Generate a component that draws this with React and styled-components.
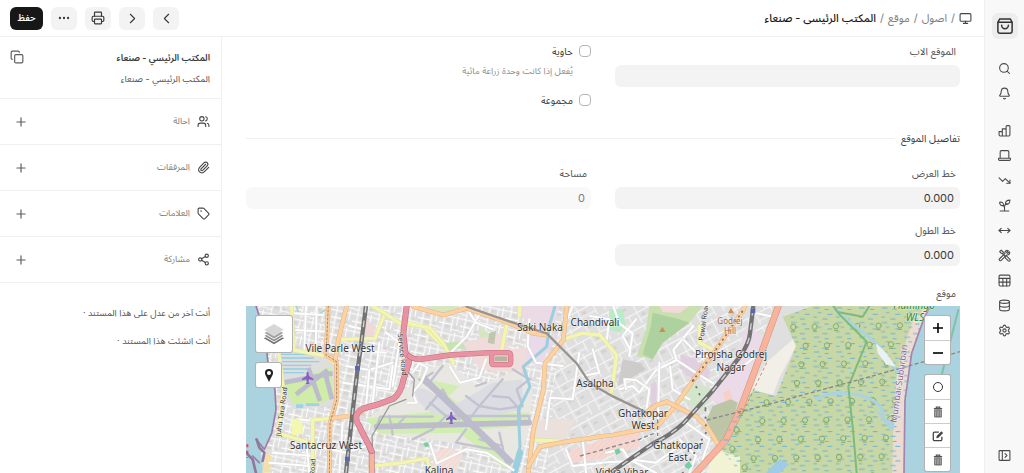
import { useState } from "react";
import styled, { createGlobalStyle } from "styled-components";
import {
  Bell,
  ChevronLeft,
  ChevronRight,
  Copy,
  Database,
  Ellipsis,
  Monitor,
  MoveHorizontal,
  Paperclip,
  Plus,
  Printer,
  Search,
  Settings,
  Share2,
  Tag,
  TrendingDown,
  Users,
} from "lucide-react";

const railItems = [
  { label: "بحث", icon: <Search /> },
  { label: "الإشعارات", icon: <Bell />, last: true },
  { label: "المحاسبة", icon: <BarsIcon /> },
  { label: "الأصول", icon: <LaptopIcon /> },
  { label: "المبيعات", icon: <TrendingDown /> },
  { label: "الزراعة", icon: <SproutIcon /> },
  { label: "الحركة", icon: <MoveHorizontal /> },
  { label: "الأدوات", icon: <ToolsIcon /> },
  { label: "الجداول", icon: <TableIcon /> },
  { label: "البيانات", icon: <Database /> },
  { label: "الإعدادات", icon: <Settings /> },
];

const asideItems = [
  { label: "احالة", icon: <Users /> },
  { label: "المرفقات", icon: <Paperclip /> },
  { label: "العلامات", icon: <Tag /> },
  { label: "مشاركة", icon: <Share2 /> },
];

function App() {
  return (
    <Page dir="rtl">
      <GlobalStyle />
      <Rail>
        <LogoButton aria-label="الرئيسية">
          <BagIcon />
        </LogoButton>
        {railItems.map((item) => (
          <RailButton key={item.label} aria-label={item.label} $last={item.last}>
            {item.icon}
          </RailButton>
        ))}
        <RailBottom>
          <RailButton aria-label="توسيع">
            <PanelIcon />
          </RailButton>
        </RailBottom>
      </Rail>
      <Main>
        <Header />
        <Body>
          <LocationForm />
          <Aside />
        </Body>
      </Main>
    </Page>
  );
}

export default App;

function Header() {
  return (
    <HeaderBar>
      <Crumbs>
        <a href="#home" aria-label="الرئيسية">
          <Monitor />
        </a>
        <span>/</span>
        <a href="#assets">اصول</a>
        <span>/</span>
        <a href="#location">موقع</a>
        <span>/</span>
        <strong>المكتب الرئيسى - صنعاء</strong>
      </Crumbs>
      <Actions>
        <ToolButton aria-label="السابق" $big>
          <ChevronLeft />
        </ToolButton>
        <ToolButton aria-label="التالي" $big>
          <ChevronRight />
        </ToolButton>
        <ToolButton aria-label="طباعة">
          <Printer />
        </ToolButton>
        <ToolButton aria-label="المزيد">
          <Ellipsis />
        </ToolButton>
        <SaveButton>حفظ</SaveButton>
      </Actions>
    </HeaderBar>
  );
}

function Aside() {
  return (
    <AsideBox>
      <AsideTitle>
        <div>
          <h3>المكتب الرئيسي - صنعاء</h3>
          <p>المكتب الرئيسي - صنعاء</p>
        </div>
        <IconButton aria-label="نسخ">
          <Copy />
        </IconButton>
      </AsideTitle>
      {asideItems.map((item) => (
        <AsideRow key={item.label}>
          {item.icon}
          <span>{item.label}</span>
          <IconButton aria-label={`إضافة ${item.label}`} $inset>
            <Plus />
          </IconButton>
        </AsideRow>
      ))}
      <Notes>
        <p>أنت آخر من عدل على هذا المستند ·</p>
        <p>أنت انشئت هذا المستند ·</p>
      </Notes>
    </AsideBox>
  );
}

function LocationForm() {
  const [values, setValues] = useState({
    parent: "",
    latitude: "0.000",
    longitude: "0.000",
  });

  const handleChange = (e) => {
    setValues({ ...values, [e.target.name]: e.target.value });
  };

  return (
    <Form>
      <Columns>
        <Field>
          <label htmlFor="parent">الموقع الاب</label>
          <input id="parent" name="parent" value={values.parent} onChange={handleChange} />
        </Field>
        <Checks>
          <CheckLabel>
            <input type="checkbox" />
            حاوية
          </CheckLabel>
          <Hint>يُفعل إذا كانت وحدة زراعة مائية</Hint>
          <CheckLabel>
            <input type="checkbox" />
            مجموعة
          </CheckLabel>
        </Checks>
      </Columns>
      <SectionTitle>تفاصيل الموقع</SectionTitle>
      <Columns>
        <div>
          <Field>
            <label htmlFor="latitude">خط العرض</label>
            <input id="latitude" name="latitude" value={values.latitude} onChange={handleChange} />
          </Field>
          <Field>
            <label htmlFor="longitude">خط الطول</label>
            <input id="longitude" name="longitude" value={values.longitude} onChange={handleChange} />
          </Field>
        </div>
        <Field>
          <label htmlFor="area">مساحة</label>
          <input id="area" value="0" disabled readOnly />
        </Field>
      </Columns>
      <MapTitle>موقع</MapTitle>
      <LocationMap />
    </Form>
  );
}

function LocationMap() {
  return (
    <MapBox dir="ltr">
      <MapTiles />
      <MapControls $side="left">
        <MapGroup>
          <MapButton $large aria-label="الطبقات">
            <LayersIcon />
          </MapButton>
        </MapGroup>
        <MapGroup>
          <MapButton aria-label="موقعي">
            <PinIcon />
          </MapButton>
        </MapGroup>
      </MapControls>
      <MapControls $side="right">
        <MapGroup>
          <MapButton aria-label="تكبير">
            <svg viewBox="0 0 12 12" width="12" height="12">
              <path d="M6 1v10M1 6h10" stroke="#000" strokeWidth="1.6" />
            </svg>
          </MapButton>
          <MapButton aria-label="تصغير">
            <svg viewBox="0 0 12 12" width="12" height="12">
              <path d="M1 6h10" stroke="#000" strokeWidth="1.6" />
            </svg>
          </MapButton>
        </MapGroup>
        <MapGroup>
          <MapButton aria-label="رسم دائرة">
            <svg viewBox="0 0 12 12" width="12" height="12">
              <circle cx="6" cy="6" r="4.5" fill="none" stroke="#333" />
            </svg>
          </MapButton>
          <MapButton aria-label="مسح">
            <TrashIcon />
          </MapButton>
          <MapButton aria-label="تعديل">
            <EditIcon />
          </MapButton>
          <MapButton aria-label="حذف الكل">
            <TrashIcon />
          </MapButton>
        </MapGroup>
      </MapControls>
    </MapBox>
  );
}

// road: wide casing stroke with the fill stroke on top
function Road({ d, fill, edge, width = 10 }) {
  return (
    <>
      <path d={d} stroke={edge} strokeWidth={width + 3} />
      <path d={d} stroke={fill} strokeWidth={width} />
    </>
  );
}

function Railway({ d }) {
  return (
    <>
      <path d={d} stroke="#737373" strokeWidth="13" strokeLinecap="butt" />
      <path d={d} stroke="#d6d6d6" strokeWidth="4" strokeDasharray="20 24" strokeLinecap="butt" />
    </>
  );
}

const yellowRoads = [
  "M137 0L142 132L240 150L276 180",
  "M282 100L387 97L417 22",
  "M380 0L417 22L462 52L532 62L590 120",
  "M97 132L112 252L97 382L205 414",
  "M200 501V342L257 337",
  "M372 482L470 470L542 457L556 501",
  "M472 48L552 66L592 112L622 172",
  "M783 50L767 132M822 0L820 30",
  "M962 97L1007 82L1062 87L1112 147L1097 257",
  "M860 402L962 406",
  "M1360 60L1360 110L1400 130",
];

const orangeRoads = [
  "M247 0L240 147L272 167L272 282L252 352L250 501",
  "M302 0L277 102L268 162",
  "M257 337L332 327L362 307",
  "M502 2L592 27L662 7L792 52L862 82L902 87",
  "M962 0L952 102L897 172L892 252L862 372L847 501",
  "M847 482L882 422L962 407L1062 392L1102 387L1232 362L1287 302L1342 222L1402 142L1492 12L1497 0",
  "M1182 332L1232 297L1262 287L1352 332L1390 372L1422 425",
];

const whiteRoads = [
  "M142 22L232 27M150 72L240 77M180 0L175 132M212 0L209 132M300 180L370 192L440 170M290 230L430 250L440 180",
  "M370 192L360 300M400 110L380 290M420 80L460 110L440 240M300 130L420 140M310 60L350 70",
  "M180 400L190 501M160 340L200 345M210 420L300 440L360 420M80 440L200 450M290 350L280 501M70 470L190 480",
  "M500 200L520 172L545 185L525 230L500 260L512 290L485 290",
  "M612 182L642 230L700 215L720 160M702 22L662 92L602 152M662 7L690 50L740 70M850 40L845 120L870 170L950 180",
  "M552 412L572 472L660 430L722 440L802 492M980 0L950 72M1000 140L980 280L912 275L900 370",
  "M1032 30L1090 40L1080 120M1102 0L1120 52L1160 82L1150 150M1170 40L1130 90L1152 130M1040 130L1060 200L1010 210",
  "M1342 60L1282 132L1292 162L1230 192L1180 260L1160 240L1120 250M1292 162L1352 202L1402 232M1272 182L1280 250L1330 280",
  "M1312 100L1360 150L1390 150M1140 250L1135 220L1170 222L1210 250L1200 320M1240 170L1235 390",
  "M1080 440L1130 430L1150 460L1230 470L1300 420M1050 470L1160 465L1230 501M1300 400L1350 450L1330 501M1320 350L1390 400L1370 460",
  "M1522 20L1582 32L1602 0M1480 190L1530 150M960 430L980 480L1070 470M1010 400L1020 500",
];

const taxiways = [
  "M392 362L402 332H560M430 330L440 385M480 330L450 362M552 290L600 330H730L850 330",
  "M540 310L590 250L640 340M550 230L590 180M600 330L560 370L500 400M560 200L530 220",
  "M660 270L700 300L670 340M700 300L770 220M700 300L760 310L830 300L812 250L850 220L800 190M690 240L720 230",
  "M740 270L790 275L820 310L822 340M520 220L560 250L612 300M660 370L630 410L740 430M760 380L780 470M700 400L770 420M850 330V348",
];

const trees = [];
for (let row = 0; row < 9; row++) {
  for (let col = 0; col < 12; col++) {
    trees.push([1450 + col * 64 + ((row * 37) % 50), 36 + row * 56 + ((col * 29) % 30)]);
  }
}

function MapTiles() {
  return (
    <svg viewBox="0 0 714 300" width="100%" preserveAspectRatio="xMidYMin slice" aria-hidden="true">
      <defs>
        <pattern id="streets" width="64" height="52" patternUnits="userSpaceOnUse" patternTransform="rotate(12)">
          <path d="M20 14h12v8h-12zM46 34h8v8h-8zM20 34h14v8h-14z" fill="#d8d3ce" />
          <path d="M0 8H64M0 30H40M14 0V52M40 8V52M54 0V30M40 44H64M0 46H14" stroke="#fff" strokeWidth="3" fill="none" />
        </pattern>
        <pattern id="streets-east" width="78" height="86" patternUnits="userSpaceOnUse" patternTransform="rotate(-28)">
          <path d="M18 18h16v8h-16zM54 24h12v7h-12zM22 60h12v9h-12z" fill="#d5d1ce" />
          <path d="M0 10H78M12 10V86M44 0V52M0 52H78M62 52V86M12 74H62" stroke="#f7f7f7" strokeWidth="3" fill="none" />
        </pattern>
        <pattern id="marsh" width="68" height="44" patternUnits="userSpaceOnUse">
          <path d="M3 6h17M36 10h12M16 20h10M44 25h15M2 33h11M29 39h16" stroke="#6cb2d8" strokeWidth="3" />
        </pattern>
        <pattern id="hatch" width="12" height="12" patternUnits="userSpaceOnUse" patternTransform="rotate(45)">
          <path d="M0 0V12" stroke="#f2c0b8" strokeWidth="2" />
        </pattern>
        <clipPath id="mangrove">
          <path d="M1610 32L1700 0H2050L1985 90L1952 212L1942 382V501H1482L1422 425L1472 322L1522 252L1590 270L1650 120Z" />
        </clipPath>
      </defs>
      <g transform="scale(0.33333)" fill="none" strokeLinejoin="round" strokeLinecap="round">
        <rect width="2142" height="900" fill="#e0dfdf" />
        <rect width="1100" height="900" fill="url(#streets)" />
        <path d="M950 0H1630L1400 501H900Z" fill="#e0dfdf" />
        <path d="M950 0H1630L1400 501H900Z" fill="url(#streets-east)" />

        {/* land use patches */}
        <path d="M552 0H640L610 22L560 15ZM700 62L750 95L740 130L700 110Z" fill="#d6e5c2" />
        <path d="M592 112L650 105L660 125L600 135Z" fill="#c4e6ac" />
        <path d="M650 110L770 80L790 130L880 122L860 170L820 200L700 190Z" fill="#f0dcdb" />
        <path d="M730 80L750 75L745 115L725 110Z" fill="#bfc7ae" />
        <path d="M842 82L942 92L900 142L890 190L840 160Z" fill="#e8dae8" />
        <path d="M802 0H940L920 70L850 60Z" fill="#eadbe5" />
        <path d="M355 40L390 60L380 92H350Z" fill="#f0d8d8" />
        <path d="M860 340H990L960 400H870Z" fill="#eae0dc" />
        <path d="M560 440L600 425L650 440L630 501H560Z" fill="#f3e0dc" />
        <path d="M560 440L600 425L650 440L630 501H560Z" fill="url(#hatch)" />
        <path d="M972 432L1182 372V420L1060 460L970 470Z" fill="#f5d8d2" />
        <path d="M972 432L1182 372V420L1060 460L970 470Z" fill="url(#hatch)" />
        <path d="M137 342L170 330V382L137 390Z" fill="#f3f7b0" />
        <path d="M1090 10H1130L1140 60L1120 80L1090 70Z" fill="#b9ebc6" />
        <path d="M1305 145L1350 160L1380 215L1335 215L1300 185ZM1350 182L1380 170L1395 200L1370 220ZM1214 235L1232 225V320L1214 330Z" fill="#e0cfdf" />
        <path d="M1300 280L1340 230L1410 250L1370 315Z" fill="#d3e6cb" />
        <path d="M1130 160L1180 170L1200 190L1150 220L1115 240Z" fill="#cdccca" />

        {/* forest hill */}
        <path d="M1210 0H1370L1330 50L1250 110L1220 160L1172 150L1200 70Z" fill="#c8dfaf" />
        <path d="M1220 20L1300 40L1330 50L1250 110L1220 160L1190 145L1215 60Z" fill="#aed1a0" />
        <path d="M1240 0L1330 0L1300 22L1250 18Z" fill="#f2dada" />
        <path d="M1240 78l9-16 9 16zM1446 22l9-16 9 16z" fill="#d08a4c" />

        {/* industrial strip along the railway */}
        <path d="M1500 62L1582 102L1550 190L1470 330L1392 280L1420 210L1470 150Z" fill="#ebdbe8" />
        <path d="M1430 262L1450 250L1460 275L1440 290Z" fill="#f8cfc9" />
        <path d="M1400 300L1455 280L1475 290L1452 380L1420 410L1380 345Z" fill="#bcc5a6" />
        <path d="M1582 0H1720L1660 90L1600 140L1540 215L1500 290L1470 330Z" fill="#dfdfdf" />
        <path d="M1560 170L1670 75L1640 140L1600 215L1580 270L1500 300L1530 220Z" fill="#f2efe9" />
        <path d="M1610 32L1700 0H2050L1985 90L1952 212L1942 382V501H1482L1422 425L1472 322L1522 252L1590 270L1650 120Z" fill="#c8d7a6" />
        <path d="M1404 430L1482 452V501H1382Z" fill="#f2f3d4" />

        {/* airport */}
        <path d="M402 312L490 240L540 190L602 172L700 240L820 190L860 250L852 350L820 470L802 501L700 430L560 400L400 385L362 340Z" fill="#e9e7e1" />
        <path d="M360 338L430 330L560 318L640 240L520 215L500 230L530 205L670 320L850 320V358L700 370L800 480L780 490L640 380L400 384Z" fill="#d2edb2" />
        <path d="M520 290L500 240L540 250L620 300L740 230L830 220V310L740 330L560 325Z" fill="#dcdce3" />
        {taxiways.map((d) => (
          <path key={d} d={d} stroke="#c2c2d0" strokeWidth="7" />
        ))}
        <path d="M392 362L850 350" stroke="#bcbccd" strokeWidth="17" />
        <path d="M530 214L798 472" stroke="#bcbccd" strokeWidth="20" strokeLinecap="butt" />
        <path d="M97 132L240 150L268 180L262 300L140 310L100 250Z" fill="#dedede" />
        <path d="M112 232L255 182L262 272L225 292L140 295Z" fill="#cfeca8" />
        <path d="M112 230L260 202M187 185L222 285M150 265L245 192M240 210L258 280" stroke="#bcbccd" strokeWidth="14" strokeLinecap="butt" />
        <path d="M105 145h80M107 156h95M108 167h110M110 178h85M112 189h70M114 200h60" stroke="#90cfe4" strokeWidth="4" />
        <path d="M150 295h22v12h-22zM180 292h40v8h-40z" fill="#9fd3e2" />

        {/* water */}
        <path d="M0 0H30L57 82L67 182L87 252L90 312L77 382L45 440L52 501V900H0Z" fill="#aad3df" />
        <path d="M60 440L77 450L72 500H48L55 470Z" fill="#f5dfa8" />
        <path d="M30 0L57 82L67 182L87 252L90 312L77 382L55 430L30 400M40 470L20 450" stroke="#9c7ba8" strokeWidth="5" />
        <path d="M32 400L40 425L55 440L50 465M0 440L20 460L30 501" stroke="#8f789c" strokeWidth="8" />
        <path d="M4 415v40" stroke="#e0475b" strokeWidth="6" strokeDasharray="9 10" strokeLinecap="butt" />
        <path d="M927 0L912 52L902 122L832 182L852 242L817 312L822 422L805 501" stroke="#9bcede" strokeWidth="9" />
        <path d="M150 0L160 24L210 30L240 10" stroke="#a5d6c6" strokeWidth="5" />
        <path d="M805 501L822 440" stroke="#9bcede" strokeWidth="20" />

        {whiteRoads.map((d) => (
          <Road key={d} d={d} fill="#fff" edge="#dcdcdc" width={6} />
        ))}
        {yellowRoads.map((d) => (
          <Road key={d} d={d} fill="#f3f5b0" edge="#dcdeae" width={10} />
        ))}
        {orangeRoads.map((d) => (
          <Road key={d} d={d} fill="#fbd2a0" edge="#e6b283" width={11} />
        ))}
        <path d="M247 0L240 147L272 167L272 282L252 352L250 501" stroke="#a78463" strokeWidth="3" strokeDasharray="6 6" />
        <path d="M1340 225L1402 142L1492 12" stroke="#8d7361" strokeWidth="6" strokeDasharray="1 16" />
        <path d="M1310 501L1380 380L1378 310M1342 222L1380 310" stroke="#777" strokeWidth="6" strokeDasharray="1 22" />
        <path d="M662 2L792 47L902 82L952 132L992 172L1032 232L1102 272L1202 320" stroke="#99948e" strokeWidth="7" />
        <path d="M1002 450L1180 400L1230 380M1235 320V390" stroke="#888" strokeWidth="4" strokeDasharray="12 8" strokeLinecap="butt" />
        <path d="M380 430L378 390L430 300L480 280M500 270L505 220L480 190" stroke="#9a9a9a" strokeWidth="4" />

        <Railway d="M360 0L347 102L332 212L317 342L300 501" />
        <Railway d="M1092 501L1222 412Q1270 390 1312 352L1402 252L1482 152Q1510 110 1512 82L1522 0" />
        <path d="M327 180h14v14h-14zM297 452h14v14h-14zM1514 8h14v14h-14z" fill="#5b67ad" />

        <Road d="M367 412L377 440V501" fill="#f9b29c" edge="#a5606b" width={14} />
        <Road
          d="M482 0L472 82L478 140Q492 155 488 172L472 222Q465 262 442 278L400 294L352 307Q325 320 332 345L352 385L377 435"
          fill="#e892a2"
          edge="#b8707c"
          width={15}
        />
        <Road
          d="M490 150Q502 162 530 159L612 147L732 140H785Q794 140 794 150V168Q794 176 785 176H745Q737 176 737 168V144"
          fill="#e892a2"
          edge="#c07080"
          width={13}
        />
        <path d="M747 151H784V166H747Z" fill="#b7b39f" />
        <Road d="M1597 0L1542 152L1482 312L1440 402L1332 520" fill="#f9b29c" edge="#c8947d" width={17} />
        <path d="M1562 170L1490 320" stroke="#ca8a5f" strokeWidth="3" strokeDasharray="9 8" strokeLinecap="butt" />

        {/* mangrove */}
        <g clipPath="url(#mangrove)">
          <rect x="1400" width="700" height="501" fill="url(#marsh)" />
          {trees.map(([x, y]) => (
            <g key={`${x}-${y}`} stroke="#85ad6c" strokeWidth="3">
              <circle cx={x} cy={y} r="8" />
              <path d={`M${x - 5} ${y + 12}h10`} />
            </g>
          ))}
        </g>
        <path d="M1712 277Q1782 250 1850 270T1910 340L1972 367" stroke="#aad3df" strokeWidth="10" />
        <path d="M1880 300L1930 350L1972 355V382L1930 370Z" fill="#aad3df" />
        <path d="M1767 12L1892 112L1942 182L1982 220" stroke="#aad3df" strokeWidth="9" />
        <path d="M1890 112L1920 140L1950 182L1920 175L1895 140Z" fill="#e9f1f5" />
        <path d="M1560 501L1600 460L1630 475L1600 501Z" fill="#9fcbe6" />
        <path d="M1762 0L1780 25L1862 107L1807 242L1822 382L1832 501M1775 18L1850 32L1870 0" stroke="#7dbb7a" strokeWidth="6" />

        {/* creek shore */}
        <path d="M2042 0L2002 42L1985 90L1962 212L1942 382L1938 501H1974L1977 282L1997 142L2032 42L2052 0Z" fill="#ebdbd0" />
        <path d="M2042 0L2002 42L1985 90L1962 212L1942 382L1938 501H1974L1977 282L1997 142L2032 42L2052 0Z" fill="url(#marsh)" />
        <path d="M2052 0H2142V900H1974V501L1977 282L1997 142L2032 42Z" fill="#aad3df" />
        <path d="M2052 0L2032 42L1997 142L1977 282L1974 501" stroke="#a783ad" strokeWidth="5" />
        <path d="M2137 12L2087 207" stroke="#7cc3a7" strokeWidth="6" />
        <path d="M1382 342L1542 302L1872 212L2142 137" stroke="#888" strokeWidth="4" strokeDasharray="12 7" strokeLinecap="butt" />

        <path d="M182 198l5 0 2 12 13 8v5l-13-3-1 10 4 4h-14l4-4-1-10-13 3v-5l13-8z" fill="#8461c4" />
        <path d="M613 318l5 0 2 12 12 8v5l-12-3-1 10 4 4h-14l4-4-1-10-12 3v-5l12-8z" fill="#8461c4" />
        <path d="M1105 432l14-5 6 12-14 8zM1315 478l14-12 10 14-12 10zM532 412l12-4 6 12-12 4z" fill="#75cfa4" />
      </g>
      <g>
        <Place x="94" y="46">Vile Parle West</Place>
        <Place x="80" y="143">Santacruz West</Place>
        <Place x="294" y="25">Saki Naka</Place>
        <Place x="349" y="20">Chandivali</Place>
        <Place x="349" y="81">Asalpha</Place>
        <Place x="193" y="168">Kalina</Place>
        <Place x="397" y="111">Ghatkopar</Place>
        <Place x="397" y="123">West</Place>
        <Place x="432" y="143">Ghatkopar</Place>
        <Place x="432" y="155">East</Place>
        <Place x="376" y="170">Vidya Vihar</Place>
        <Place x="485" y="52">Pirojsha Godrej</Place>
        <Place x="485" y="65">Nagar</Place>
        <Place x="484" y="18" $color="#a0604a" $size={8}>Godrej</Place>
        <Place x="484" y="28" $color="#a0604a" $size={8}>Hill</Place>
        <Place x="669" y="15" $color="#1b8a2f" $italic>WLS</Place>
        <Place x="668" y="3" $color="#1b8a2f" $italic>Flamingo</Place>
        <Place transform="translate(656 78) rotate(-82)" $color="#8c6398" $size={9}>Mumbai Suburban</Place>
        <Place transform="translate(38 106) rotate(-82)" $size={7}>Juhu Tara Road</Place>
        <Place transform="translate(69 161) rotate(-86)" $size={7}>Road</Place>
        <Place transform="translate(154 49) rotate(84)" $size={7}>Service Road</Place>
        <Place transform="translate(460 16) rotate(-82)" $size={7}>Powai Road</Place>
      </g>
    </svg>
  );
}

function BagIcon() {
  return (
    <svg viewBox="0 0 24 24" width="18" height="18" fill="none" stroke="#333" strokeWidth="2">
      <path d="M5 2.5h14L21.5 7v11.5a3 3 0 0 1-3 3h-13a3 3 0 0 1-3-3V7zM2.5 7h19" />
      <path d="M7.5 11a4.5 4.5 0 0 0 9 0" strokeLinecap="round" />
    </svg>
  );
}

function BarsIcon() {
  return (
    <svg viewBox="0 0 24 24">
      <path d="M2 14h6v8H4a2 2 0 0 1-2-2zM8 9h7v13H8zM15 5a2 2 0 0 1 2-2h3a2 2 0 0 1 2 2v15a2 2 0 0 1-2 2h-5z" />
    </svg>
  );
}

function LaptopIcon() {
  return (
    <svg viewBox="0 0 24 24">
      <path d="M4 17V5a2 2 0 0 1 2-2h12a2 2 0 0 1 2 2v12M1 17h22v2a2 2 0 0 1-2 2H3a2 2 0 0 1-2-2z" />
    </svg>
  );
}

function TableIcon() {
  return (
    <svg viewBox="0 0 24 24">
      <rect x="2" y="2" width="20" height="20" rx="2" />
      <path d="M2 8h20M2 15h20M9 8v14M16 8v14" />
    </svg>
  );
}

function SproutIcon() {
  return (
    <svg viewBox="0 0 24 24">
      <path d="M4 22h16M12 22v-8M12 15c0-4 2-6 5-6M12 16c0-3-2-4-4-4" />
      <path d="M14 9c-1-5 3-7 8-7 0 5-2 9-8 7zM10 12c-5 1-7-2-7-6 4-1 8 1 7 6z" />
    </svg>
  );
}

function ToolsIcon() {
  return (
    <svg viewBox="0 0 24 24">
      <path d="M3 5l3-3 4 4-1 3 4 4M3 5l3 3 3 1M13 14l1-1 2 0 6 6a2 2 0 0 1-3 3l-6-6z" />
      <path d="M21 5l-3 3-2-2 3-3c-3-2-7 1-6 5L3 18a2 2 0 0 0 3 3L16 11c4 1 7-3 5-6z" />
    </svg>
  );
}

function PanelIcon() {
  return (
    <svg viewBox="0 0 24 24">
      <rect x="2" y="3" width="20" height="18" rx="1" />
      <path d="M8 3v18M13 8.5L16.5 12 13 15.5" />
    </svg>
  );
}

function LayersIcon() {
  return (
    <svg viewBox="0 0 26 26" width="24" height="24">
      <path d="M13 11L24 17.5 13 24 2 17.5z" fill="#747474" />
      <path d="M13 8.5L24 15 13 21.5 2 15z" fill="#8d8d8d" stroke="#fff" />
      <path d="M13 5.5L24 12 13 18.5 2 12z" fill="#a4a4a4" stroke="#fff" />
      <path d="M13 2L24 8.5 13 15 2 8.5z" fill="#d6d6d6" stroke="#fff" strokeWidth=".5" />
    </svg>
  );
}

function PinIcon() {
  return (
    <svg viewBox="0 0 12 16" width="10" height="13">
      <path
        fillRule="evenodd"
        d="M6 0a5 5 0 0 1 5 5c0 3-3 6-5 11C4 11 1 8 1 5a5 5 0 0 1 5-5zm0 2.5a2.5 2.5 0 1 0 0 5 2.5 2.5 0 0 0 0-5z"
        fill="#222"
      />
    </svg>
  );
}

function TrashIcon() {
  return (
    <svg viewBox="0 0 12 14" width="10" height="12" fill="none" stroke="#555">
      <path d="M1 3h10M4 3V1h4v2" strokeWidth="1.5" />
      <path d="M2 4.5h8V13H2z" fill="#bbb" />
      <path d="M4 5v8M6 5v8M8 5v8" strokeWidth=".8" />
    </svg>
  );
}

function EditIcon() {
  return (
    <svg viewBox="0 0 14 14" width="12" height="12" fill="none" stroke="#444" strokeWidth="1.5">
      <path d="M8 2.5H3a1.5 1.5 0 0 0-1.5 1.5v7A1.5 1.5 0 0 0 3 12.5h7a1.5 1.5 0 0 0 1.5-1.5V8" />
      <path d="M5 9.5l.5-2.5L11 1.5 13 3.5 7.5 9z" fill="#444" stroke="none" />
    </svg>
  );
}

const GlobalStyle = createGlobalStyle`
  * {
    box-sizing: border-box;
  }

  body {
    margin: 0;
    color: #383838;
    background-color: #fff;
    font-family: Inter, "Noto Sans Arabic", "Noto Sans", "DejaVu Sans", sans-serif;
    font-size: 9px;
  }

  button, input {
    font: inherit;
    color: inherit;
  }

  button {
    display: flex;
    align-items: center;
    justify-content: center;
    padding: 0;
    border: none;
    background: none;
    cursor: pointer;
  }

  h3, p {
    margin: 0;
    font-size: inherit;
  }

  a {
    color: inherit;
    text-decoration: none;
  }
`;

const Page = styled.div`
  display: flex;
  height: 100vh;
  overflow: hidden;
`;

const Rail = styled.nav`
  display: flex;
  flex-direction: column;
  align-items: center;
  flex-shrink: 0;
  width: 40px;
  padding: 13px 0 5px;
  background-color: #f8f8f8;
  border-left: 1px solid #f0f0f0;
`;

const LogoButton = styled.button`
  width: 26px;
  height: 26px;
  margin-bottom: 17px;
  background-color: #ededed;
  border-radius: 6px;
`;

const RailButton = styled.button`
  width: 25px;
  height: 25px;
  flex-shrink: 0;
  margin-bottom: ${(props) => (props.$last ? "12px" : "0")};

  svg {
    width: 13px;
    height: 13px;
    fill: none;
    stroke: #4a4a4a;
    stroke-width: 2;
    stroke-linecap: round;
    stroke-linejoin: round;
  }
`;

const RailBottom = styled.div`
  margin-top: auto;
`;

const Main = styled.main`
  display: flex;
  flex-direction: column;
  flex: 1;
  min-width: 0;
`;

const HeaderBar = styled.header`
  display: flex;
  align-items: center;
  justify-content: space-between;
  flex-shrink: 0;
  height: 37px;
  padding: 0 12px 0 10px;
  border-bottom: 1px solid #f0f0f0;
`;

const Crumbs = styled.nav`
  display: flex;
  align-items: center;
  gap: 4px;
  font-size: 11px;
  color: #7c7c7c;

  a {
    display: flex;
  }

  svg {
    width: 13px;
    height: 13px;
    color: #444;
  }

  strong {
    font-weight: 500;
    color: #171717;
  }
`;

const Actions = styled.div`
  display: flex;
  gap: 8px;
`;

const ToolButton = styled.button`
  width: 26px;
  height: 23px;
  background-color: #f3f3f3;
  border-radius: 6px;

  svg {
    width: ${(props) => (props.$big ? "17px" : "14px")};
    height: ${(props) => (props.$big ? "17px" : "14px")};
    stroke-width: ${(props) => (props.$big ? "1.5" : "2")};
  }
`;

const SaveButton = styled(ToolButton)`
  width: 33px;
  color: #fff;
  font-weight: 600;
  background-color: #171717;
`;

const Body = styled.div`
  display: flex;
  flex: 1;
  min-height: 0;
`;

const AsideBox = styled.aside`
  width: 222px;
  flex-shrink: 0;
  border-right: 1px solid #f0f0f0;
`;

const AsideTitle = styled.div`
  display: flex;
  align-items: flex-start;
  justify-content: space-between;
  height: 62px;
  padding: 10px 11px 0 10px;
  border-bottom: 1px solid #f0f0f0;
  line-height: 21px;
  color: #525252;

  h3 {
    font-weight: 600;
    color: #383838;
  }
`;

const IconButton = styled.button`
  width: 14px;
  height: 20px;
  margin-left: ${(props) => (props.$inset ? "4px" : "0")};

  && svg {
    width: 14px;
    height: 14px;
    stroke-width: 2;
    color: #5c5c5c;
  }
`;

const AsideRow = styled.div`
  display: flex;
  align-items: center;
  gap: 7px;
  height: 46px;
  padding: 0 11px 0 10px;
  border-bottom: 1px solid #f0f0f0;
  color: #7c7c7c;

  svg {
    width: 13px;
    height: 13px;
    stroke-width: 2;
    color: #444;
  }

  span {
    flex: 1;
  }
`;

const Notes = styled.div`
  padding: 16px 11px;
  line-height: 28px;
  color: #525252;
`;

const Form = styled.form`
  flex: 1;
  min-width: 0;
  padding: 6px 24px 0;
  overflow: hidden;
`;

const Columns = styled.div`
  display: grid;
  grid-template-columns: 1fr 1fr;
  gap: 24px;
`;

const Field = styled.div`
  height: 57px;

  label {
    display: block;
    height: 22px;
    padding-right: 4px;
    font-size: 10px;
    line-height: 16px;
    color: #525252;
  }

  input {
    display: block;
    width: 100%;
    height: 22px;
    padding: 0 6px;
    border: none;
    border-radius: 6px;
    font-size: 11px;
    background-color: #f3f3f3;
  }

  input:disabled {
    color: #7c7c7c;
    background-color: #f8f8f8;
  }
`;

const Checks = styled.div`
  height: 83px;
`;

const CheckLabel = styled.label`
  display: flex;
  align-items: center;
  gap: 6px;
  font-size: 10px;
  line-height: 16px;

  input {
    appearance: none;
    width: 12px;
    height: 12px;
    margin: 0;
    background-color: #fff;
    border: 1px solid #b5b5b5;
    border-radius: 4px;
  }
`;

const Hint = styled.p`
  height: 33px;
  padding: 4px 18px 0 0;
  line-height: 16px;
  color: #8c8c8c;
`;

const SectionTitle = styled.h3`
  display: flex;
  align-items: center;
  gap: 6px;
  height: 24px;
  margin-bottom: 15px;
  font-size: 10px;
  font-weight: 400;

  &::after {
    content: "";
    flex: 1;
    height: 1px;
    background-color: #f0f0f0;
  }
`;

const MapTitle = styled.p`
  height: 21px;
  margin-top: 6px;
  padding-right: 4px;
  font-size: 10px;
  line-height: 16px;
  color: #525252;
`;

const MapBox = styled.div`
  position: relative;
  overflow: hidden;

  > svg {
    display: block;
  }
`;

const MapControls = styled.div`
  position: absolute;
  top: 9px;
  ${(props) => props.$side}: 9px;
  display: flex;
  flex-direction: column;
  align-items: flex-start;
  gap: 9px;
`;

const MapGroup = styled.div`
  border: 1px solid rgba(0, 0, 0, 0.3);
  border-radius: 3px;
  background-color: #fff;
`;

const MapButton = styled.button`
  width: ${(props) => (props.$large ? "36px" : "25px")};
  height: ${(props) => (props.$large ? "36px" : "24px")};

  & + & {
    border-top: 1px solid #ccc;
  }
`;

const Place = styled.text`
  font-family: "Noto Sans", sans-serif;
  font-size: ${(props) => props.$size || 10}px;
  font-style: ${(props) => (props.$italic ? "italic" : "normal")};
  fill: ${(props) => props.$color || "#333"};
  stroke: rgba(255, 255, 255, 0.6);
  stroke-width: 1px;
  paint-order: stroke;
  text-anchor: middle;
`;
